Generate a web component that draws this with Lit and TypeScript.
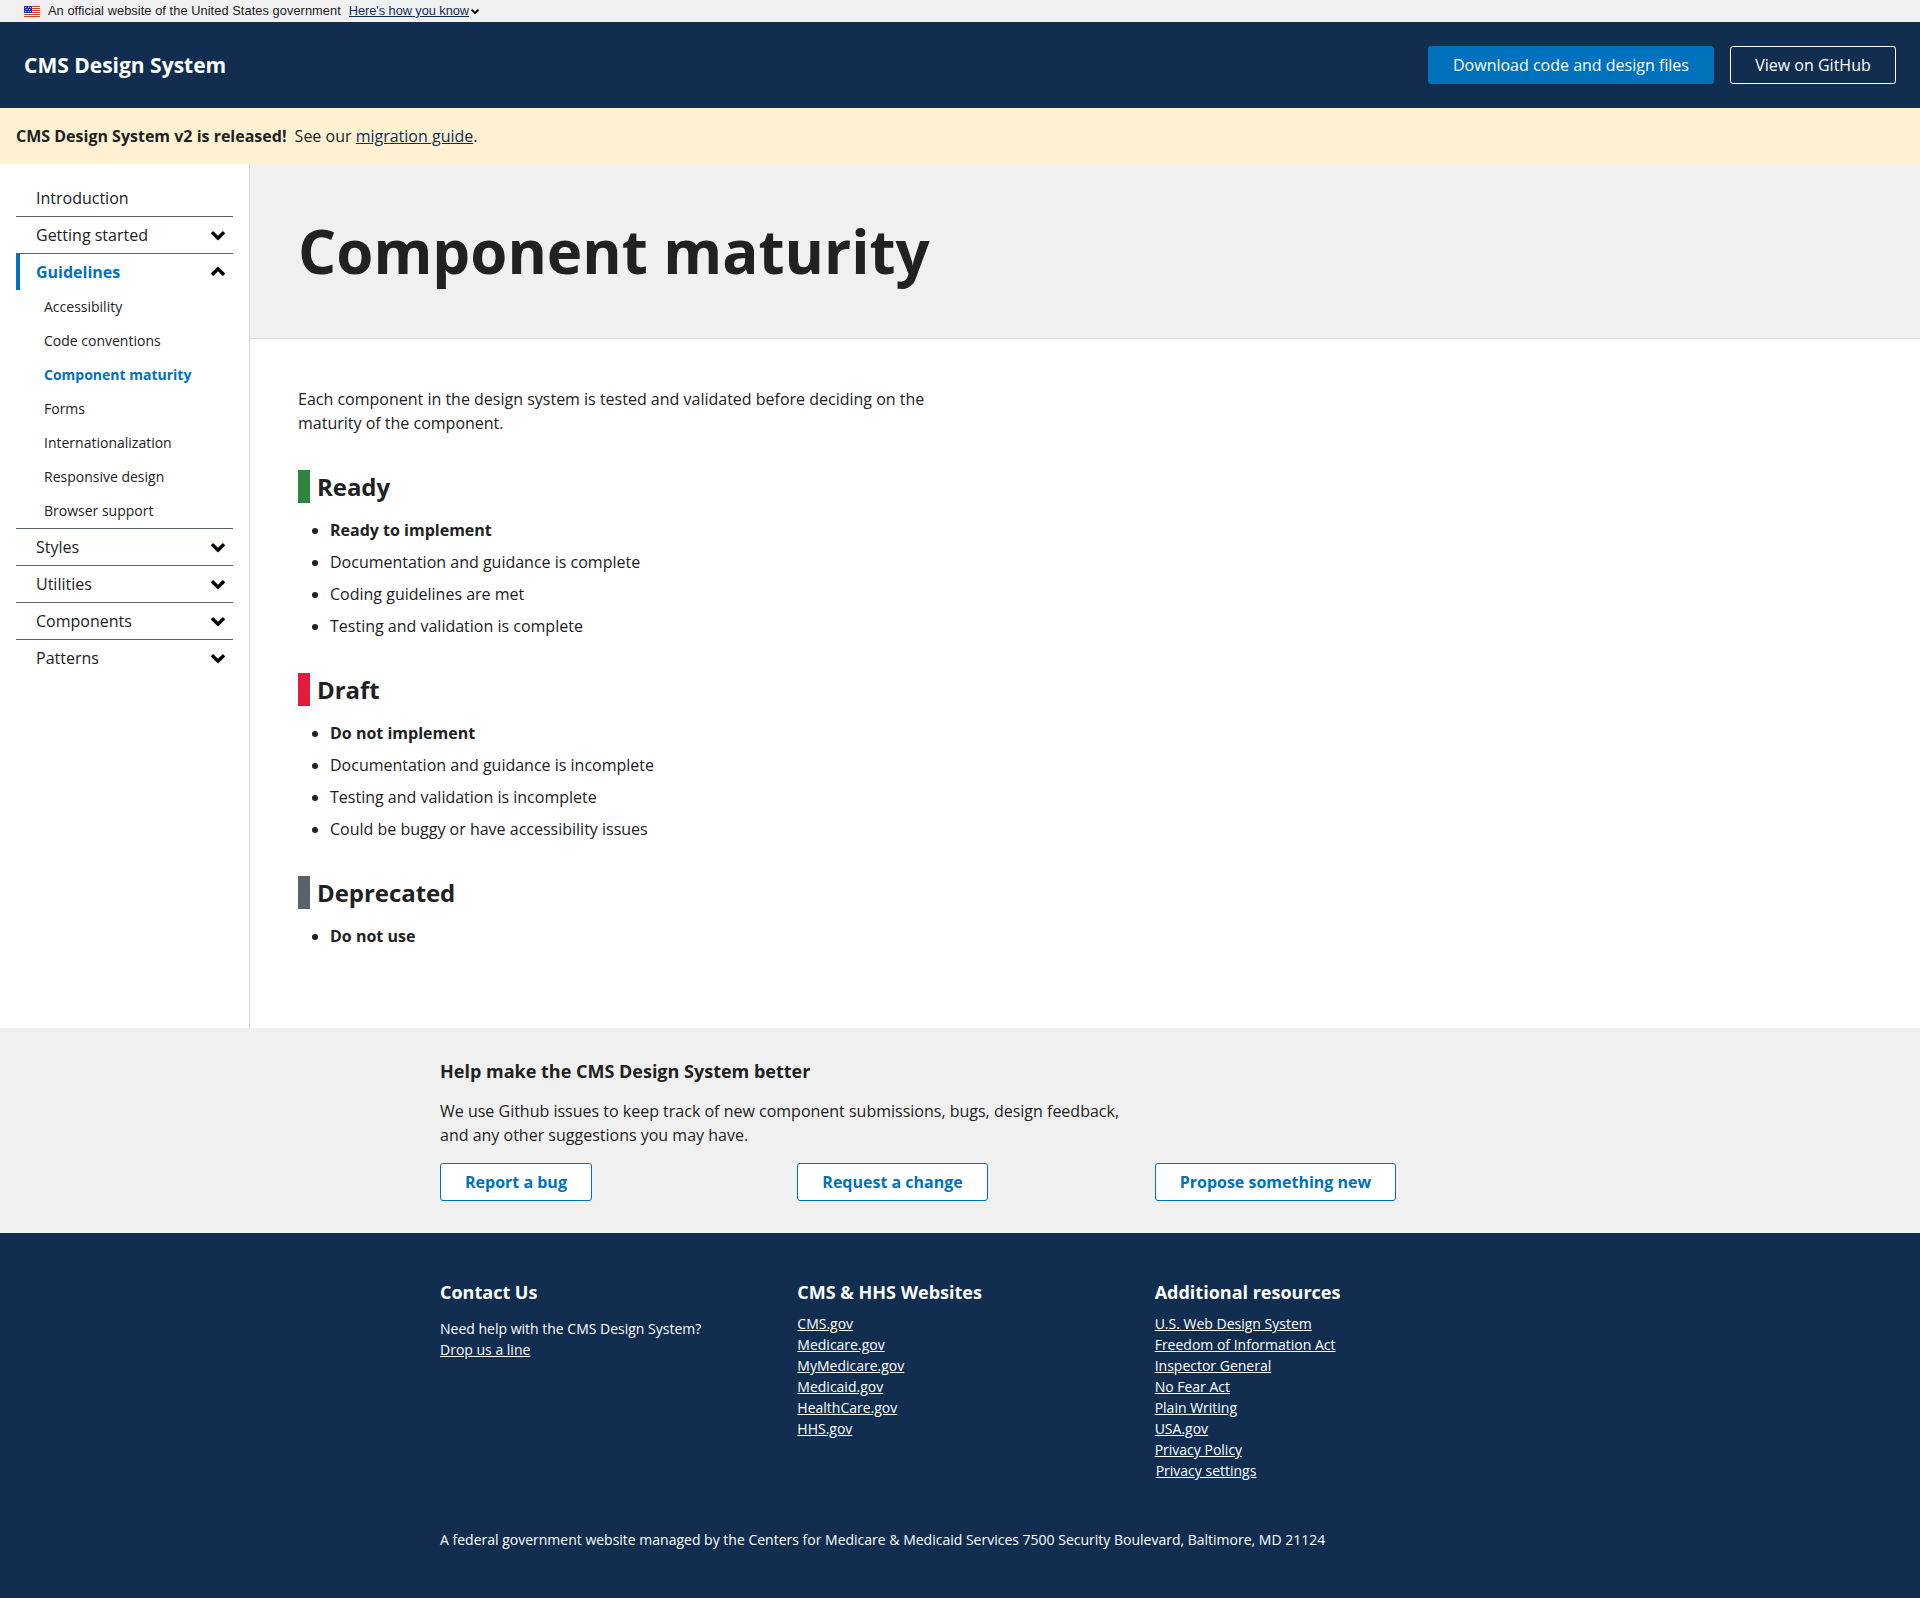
import { LitElement, html, css, svg } from "lit";
import { customElement } from "lit/decorators.js";
import { classMap } from "lit/directives/class-map.js";

interface NavItem {
  label: string;
  expandable?: boolean;
  children?: string[];
}

const NAV: NavItem[] = [
  { label: "Introduction" },
  { label: "Getting started", expandable: true },
  {
    label: "Guidelines",
    expandable: true,
    children: [
      "Accessibility",
      "Code conventions",
      "Component maturity",
      "Forms",
      "Internationalization",
      "Responsive design",
      "Browser support",
    ],
  },
  { label: "Styles", expandable: true },
  { label: "Utilities", expandable: true },
  { label: "Components", expandable: true },
  { label: "Patterns", expandable: true },
];

const LEVELS = [
  {
    name: "Ready",
    tone: "ready",
    points: [
      "Ready to implement",
      "Documentation and guidance is complete",
      "Coding guidelines are met",
      "Testing and validation is complete",
    ],
  },
  {
    name: "Draft",
    tone: "draft",
    points: [
      "Do not implement",
      "Documentation and guidance is incomplete",
      "Testing and validation is incomplete",
      "Could be buggy or have accessibility issues",
    ],
  },
  { name: "Deprecated", tone: "deprecated", points: ["Do not use"] },
];

const CMS_SITES = ["CMS.gov", "Medicare.gov", "MyMedicare.gov", "Medicaid.gov", "HealthCare.gov", "HHS.gov"];
const RESOURCES = [
  "U.S. Web Design System",
  "Freedom of Information Act",
  "Inspector General",
  "No Fear Act",
  "Plain Writing",
  "USA.gov",
  "Privacy Policy",
];

const chevron = (cls: string) => html`<svg class=${cls} viewBox="0 0 14 9" aria-hidden="true">
  <path d="M.2 2 1.5.6Q2.1.1 2.7.6L7 4.8 11.3.6Q11.9.1 12.5.6L13.8 2Q14.2 2.5 13.7 3L7.6 8.9Q7 9.4 6.4 8.9L.3 3Q-.2 2.5.2 2z" fill="#000" />
</svg>`;

const stars = [
  [1.5, 1.5], [4.2, 1.5], [6.5, 1.5],
  [2.8, 3.5], [5.5, 3.5],
  [1.5, 5.5], [4.2, 5.5], [6.5, 5.5],
];

const flag = html`<svg class="flag" viewBox="0 0 16 11" shape-rendering="crispEdges" aria-hidden="true">
  <path fill="#fff" d="M0 0h16v11H0z" />
  <path fill="#db3e1f" d="M0 0h16v1H0zM0 2h16v1H0zM0 4h16v1H0zM0 6h16v1H0zM0 8h16v1H0zM0 10h16v1H0z" />
  <path fill="#1e33b1" d="M0 0h8v7H0z" />
  ${stars.map(([x, y]) => svg`<circle cx=${x} cy=${y} r=".55" fill="#fff" shape-rendering="auto" />`)}
</svg>`;

@customElement("app-root")
export class AppRoot extends LitElement {
  static styles = css`
    :host {
      display: block;
      font: 16px/24px "Open Sans", "Noto Sans", sans-serif;
      color: #212121;
      background: #fff;
    }
    * { box-sizing: border-box; }
    h1, h2, h3, p, ul { margin: 0; padding: 0; }
    a { color: #112e51; text-decoration: underline; }
    .gov {
      display: flex;
      align-items: center;
      height: 22px;
      padding-left: 24px;
      background: #f0f0f0;
      font: 12.8px/16px "Liberation Sans", Arial, sans-serif;
      letter-spacing: 0.07px;
    }
    .flag { width: 16px; height: 11px; margin: 1px 8px 0 0; }
    .gov-link { margin-left: 8px; letter-spacing: -0.06px; }
    .mini { width: 8px; height: 5px; margin-left: 2px; overflow: visible; }
    .top {
      display: flex;
      align-items: center;
      gap: 16px;
      height: 86px;
      padding: 0 24px;
      background: #112e51;
      color: #fff;
    }
    .brand { flex: 1; font-size: 21px; font-weight: 700; }
    .btn {
      display: inline-block;
      height: 38px;
      padding: 6px 24px;
      border: 1px solid #fff;
      border-radius: 3px;
      color: #fff;
      text-decoration: none;
      white-space: nowrap;
    }
    .top .btn { min-width: 166px; text-align: center; }
    .btn.primary { background: #0071bc; border-color: #0071bc; }
    .top .btn.primary { min-width: 286px; }
    .btn.outline { background: #fff; border-color: #0071bc; color: #0071bc; font-weight: 700; }
    .alert { height: 56px; padding: 16px; background: #fff1d2; }
    .alert strong { margin-right: 4px; }
    .layout { display: grid; grid-template-columns: 250px 1fr; height: 864px; }
    .side { border-right: 1px solid #d6d7d9; padding: 16px; }
    .nav, .sub { list-style: none; }
    .nav > li + li { border-top: 1px solid #5b616b; }
    .row {
      display: flex;
      align-items: center;
      justify-content: space-between;
      height: 36px;
      padding: 0 8px 0 20px;
    }
    .row.open {
      padding-left: 16px;
      border-left: 4px solid #0071bc;
      color: #0071bc;
      font-weight: 700;
    }
    .chev { width: 14px; height: 9px; overflow: visible; }
    .open .chev { transform: rotate(180deg); margin-top: -1px; }
    .sub li { height: 34px; padding-left: 28px; font-size: 14px; line-height: 34px; }
    .sub .current { color: #0071bc; font-weight: 700; }
    .title { padding: 48px; background: #f0f0f0; border-bottom: 1px solid #d6d7d9; }
    .title h1 { font-size: 60px; line-height: 78px; font-weight: 700; }
    .body { padding: 48px; }
    .intro { width: 640px; margin-bottom: 35px; }
    .level {
      height: 33px;
      padding-left: 7px;
      border-left: 12px solid;
      font-size: 24px;
      line-height: 33px;
      letter-spacing: -0.06px;
    }
    .level span { color: #212121; }
    .ready { border-color: #2e8540; }
    .draft { border-color: #e31c3d; }
    .deprecated { border-color: #5b616b; }
    .points { margin: 15px 0 35px; padding-left: 32px; }
    .points:last-child { margin-bottom: 32px; }
    .points li + li { margin-top: 8px; }
    .points li:first-child { font-weight: 700; }
    .wrap { width: 1040px; margin: 0 auto; }
    .cols { display: grid; grid-template-columns: repeat(3, 1fr); column-gap: 32px; }
    .help { height: 205px; padding-top: 32px; background: #f0f0f0; }
    .help p { width: 700px; margin: 16px 0; }
    h3 { font-size: 18px; line-height: 23.4px; font-weight: 700; }
    .foot { height: 365px; padding-top: 48px; background: #112e51; color: #fff; font-size: 14px; line-height: 21px; }
    .foot a { color: #fff; }
    .foot .cols { height: 225px; align-content: start; }
    .links { list-style: none; margin-top: 9px; }
    .contact { margin-top: 14px; }
    .settings { padding-left: 1px; }
    .legal { margin-top: 23px; }
  `;

  private navItem(item: NavItem) {
    return html`<li>
      <div class=${classMap({ row: true, open: !!item.children })}>
        <span>${item.label}</span>${item.expandable ? chevron("chev") : null}
      </div>
      ${item.children
        ? html`<ul class="sub">
            ${item.children.map((c) => html`<li class=${classMap({ current: c === "Component maturity" })}>${c}</li>`)}
          </ul>`
        : null}
    </li>`;
  }

  render() {
    return html`
      <div class="gov">
        ${flag}<span>An official website of the United States government</span>
        <a class="gov-link" href="#">Here's how you know</a>${chevron("mini")}
      </div>
      <header class="top">
        <span class="brand">CMS Design System</span>
        <a class="btn primary" href="#">Download code and design files</a>
        <a class="btn" href="#">View on GitHub</a>
      </header>
      <div class="alert">
        <strong>CMS Design System v2 is released!</strong> See our <a href="#">migration guide</a>.
      </div>
      <div class="layout">
        <nav class="side"><ul class="nav">${NAV.map((n) => this.navItem(n))}</ul></nav>
        <main>
          <div class="title"><h1>Component maturity</h1></div>
          <div class="body">
            <p class="intro">
              Each component in the design system is tested and validated before deciding on the maturity of the
              component.
            </p>
            ${LEVELS.map(
              (l) => html`<h2 class="level ${l.tone}"><span>${l.name}</span></h2>
                <ul class="points">${l.points.map((p) => html`<li>${p}</li>`)}</ul>`
            )}
          </div>
        </main>
      </div>
      <section class="help">
        <div class="wrap">
          <h3>Help make the CMS Design System better</h3>
          <p>
            We use Github issues to keep track of new component submissions, bugs, design feedback, and any other
            suggestions you may have.
          </p>
          <div class="cols">
            ${["Report a bug", "Request a change", "Propose something new"].map(
              (t) => html`<div><a class="btn outline" href="#">${t}</a></div>`
            )}
          </div>
        </div>
      </section>
      <footer class="foot">
        <div class="wrap">
          <div class="cols">
            <div>
              <h3>Contact Us</h3>
              <p class="contact">Need help with the CMS Design System?<br /><a href="#">Drop us a line</a></p>
            </div>
            <div>
              <h3>CMS &amp; HHS Websites</h3>
              <ul class="links">${CMS_SITES.map((s) => html`<li><a href="#">${s}</a></li>`)}</ul>
            </div>
            <div>
              <h3>Additional resources</h3>
              <ul class="links">
                ${RESOURCES.map((s) => html`<li><a href="#">${s}</a></li>`)}
                <li class="settings"><a href="#">Privacy settings</a></li>
              </ul>
            </div>
          </div>
          <p class="legal">
            A federal government website managed by the Centers for Medicare &amp; Medicaid Services 7500 Security
            Boulevard, Baltimore, MD 21124
          </p>
        </div>
      </footer>
    `;
  }
}
